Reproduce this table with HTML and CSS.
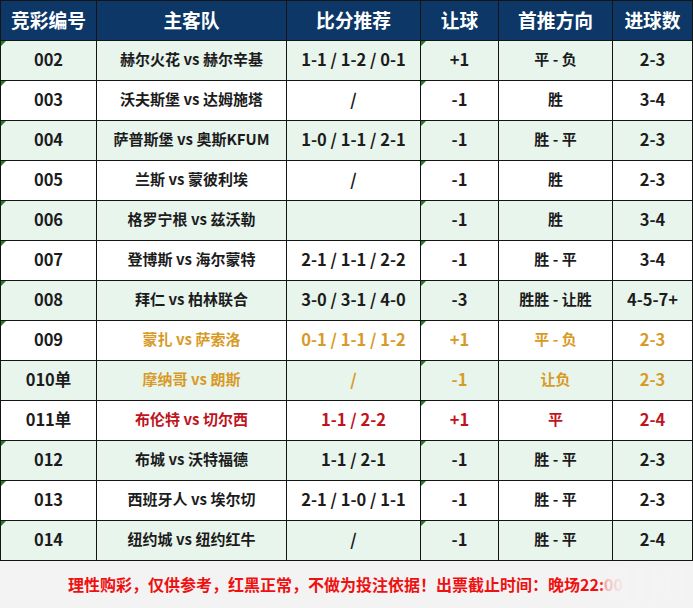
FILE: index.html
```html
<!DOCTYPE html>
<html lang="zh">
<head>
<meta charset="utf-8">
<link rel="stylesheet" href="styles.css">
</head>
<body>
<div class="page">
<table class="board">
<colgroup>
<col class="c1"><col class="c2"><col class="c3"><col class="c4"><col class="c5"><col class="c6">
</colgroup>
<thead>
<tr><th>竞彩编号</th><th>主客队</th><th>比分推荐</th><th>让球</th><th>首推方向</th><th>进球数</th></tr>
</thead>
<tbody>
<tr class="alt"><td class="mark num">002</td><td>赫尔火花 vs 赫尔辛基</td><td class="num">1-1 / 1-2 / 0-1</td><td class="mark num">+1</td><td>平 - 负</td><td class="num">2-3</td></tr>
<tr><td class="mark num">003</td><td>沃夫斯堡 vs 达姆施塔</td><td class="num">/</td><td class="mark num">-1</td><td>胜</td><td class="num">3-4</td></tr>
<tr class="alt"><td class="mark num">004</td><td>萨普斯堡 vs 奥斯KFUM</td><td class="num">1-0 / 1-1 / 2-1</td><td class="mark num">-1</td><td>胜 - 平</td><td class="num">2-3</td></tr>
<tr><td class="mark num">005</td><td>兰斯 vs 蒙彼利埃</td><td class="num">/</td><td class="mark num">-1</td><td>胜</td><td class="num">2-3</td></tr>
<tr class="alt"><td class="mark num">006</td><td>格罗宁根 vs 兹沃勒</td><td class="num"></td><td class="mark num">-1</td><td>胜</td><td class="num">3-4</td></tr>
<tr><td class="mark num">007</td><td>登博斯 vs 海尔蒙特</td><td class="num">2-1 / 1-1 / 2-2</td><td class="mark num">-1</td><td>胜 - 平</td><td class="num">3-4</td></tr>
<tr class="alt"><td class="mark num">008</td><td>拜仁 vs 柏林联合</td><td class="num">3-0 / 3-1 / 4-0</td><td class="mark num">-3</td><td>胜胜 - 让胜</td><td class="num">4-5-7+</td></tr>
<tr class="gold"><td class="mark num">009</td><td>蒙扎 vs 萨索洛</td><td class="num">0-1 / 1-1 / 1-2</td><td class="mark num">+1</td><td>平 - 负</td><td class="num">2-3</td></tr>
<tr class="alt gold"><td class="num">010单</td><td>摩纳哥 vs 朗斯</td><td class="num">/</td><td class="mark num">-1</td><td>让负</td><td class="num">2-3</td></tr>
<tr class="red"><td class="num">011单</td><td>布伦特 vs 切尔西</td><td class="num">1-1 / 2-2</td><td class="mark num">+1</td><td>平</td><td class="num">2-4</td></tr>
<tr class="alt"><td class="mark num">012</td><td>布城 vs 沃特福德</td><td class="num">1-1 / 2-1</td><td class="mark num">-1</td><td>胜 - 平</td><td class="num">2-3</td></tr>
<tr><td class="mark num">013</td><td>西班牙人 vs 埃尔切</td><td class="num">2-1 / 1-0 / 1-1</td><td class="mark num">-1</td><td>胜 - 平</td><td class="num">2-3</td></tr>
<tr class="alt"><td class="mark num">014</td><td>纽约城 vs 纽约红牛</td><td class="num">/</td><td class="mark num">-1</td><td>胜 - 平</td><td class="num">2-4</td></tr>
</tbody>
</table>
<div class="footer">
<p class="note">理性购彩，仅供参考，红黑正常，不做为投注依据！出票截止时间：晚场22:00</p>
<div class="watermark"></div>
</div>
</div>
</body>
</html>
```

FILE: styles.css
```css
html, body {
  margin: 0;
  padding: 0;
  background: #ffffff;
}

.page {
  width: 693px;
  font-family: "Noto Sans CJK SC", "Noto Sans", sans-serif;
}

.board {
  width: 693px;
  border-collapse: collapse;
  table-layout: fixed;
  border-right: 1px solid #ffffff;
}

.c1 { width: 96px; }
.c2 { width: 190px; }
.c3 { width: 134px; }
.c4 { width: 78px; }
.c5 { width: 114px; }
.c6 { width: 80px; }

.board th,
.board td {
  border: 1px solid #141414;
  text-align: center;
  vertical-align: middle;
  white-space: nowrap;
}

.board th {
  height: 37px;
  padding: 0 0 2px 0;
  background: #0c3766;
  color: #ffffff;
  font-size: 18.75px;
  font-weight: 700;
  line-height: 20px;
}

.board td {
  height: 36px;
  padding: 0 0 3px 0;
  font-size: 15px;
  font-weight: 700;
  color: #1c1c1c;
  line-height: 18px;
  position: relative;
}

.board td.num {
  font-size: 16.5px;
}

.board tr.alt td {
  background: #e8f5ed;
}

.board tr.gold td {
  color: #d89a26;
}

.board tr.red td {
  color: #c0141c;
}

.board tr.gold td:first-child,
.board tr.red td:first-child {
  color: #1c1c1c;
}

.board td.mark::before {
  content: "";
  position: absolute;
  left: 0;
  top: 0;
  width: 0;
  height: 0;
  border-top: 5px solid #2a7a2e;
  border-right: 5px solid transparent;
}

.footer {
  position: relative;
  height: 47px;
  background: #f3f3f3;
  display: flex;
  align-items: center;
  justify-content: center;
}

.note {
  margin: 0 0 2px 0;
  font-size: 16px;
  font-weight: 700;
  color: #ee1111;
  padding-right: 2px;
}

.watermark {
  position: absolute;
  left: 603px;
  top: 6px;
  width: 90px;
  height: 34px;
  background: linear-gradient(90deg, rgba(243,243,243,0.7) 0%, rgba(243,243,243,0.95) 20%, rgba(243,243,243,0.97) 100%);
  filter: blur(2px);
}
```
